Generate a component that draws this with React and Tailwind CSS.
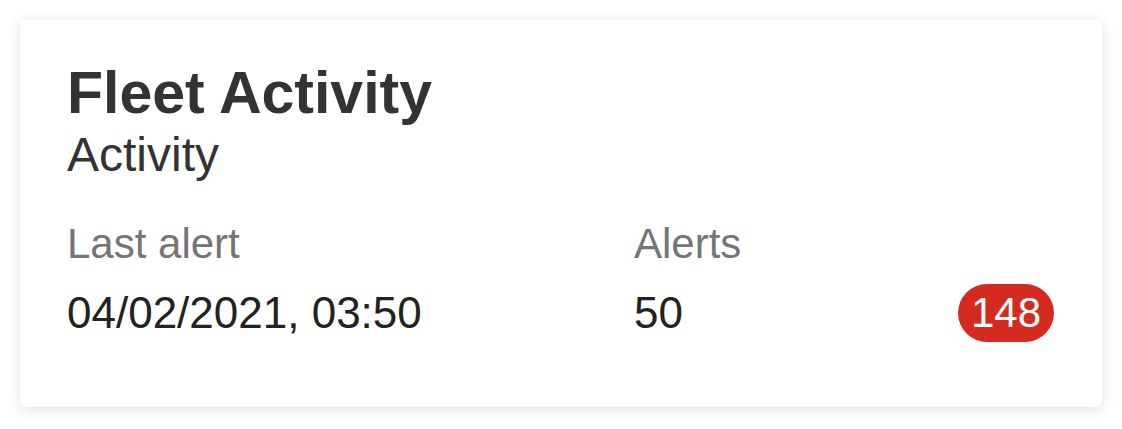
export default function App() {
  return (
    <div className="min-h-screen bg-white p-5 font-['Liberation_Sans',Arial,sans-serif]">
      <div className="rounded-md bg-white pl-[47px] pr-[48px] pt-[43px] pb-[65px] shadow-[0_2px_14px_rgba(0,0,0,0.13)]">
        <h1 className="text-[59px] leading-[60px] font-bold text-[#333333]">Fleet Activity</h1>
        <div className="mt-[4px] text-[48px] leading-[56px] text-[#333333]">Activity</div>

        <div className="mt-[36px] grid grid-cols-[567px_1fr_auto] items-center gap-y-[15px]">
          <div className="text-[42px] leading-[50px] text-[#757575]">Last alert</div>
          <div className="text-[42px] leading-[50px] text-[#757575]">Alerts</div>
          <div />
          <div className="text-[44px] leading-[50px] text-[#222222]">04/02/2021, 03:50</div>
          <div className="text-[44px] leading-[50px] text-[#222222]">50</div>
          <span className="flex h-[58px] items-center rounded-full bg-[#d42a1f] px-[13px] text-[42px] leading-none text-white">
            148
          </span>
        </div>
      </div>
    </div>
  );
}
